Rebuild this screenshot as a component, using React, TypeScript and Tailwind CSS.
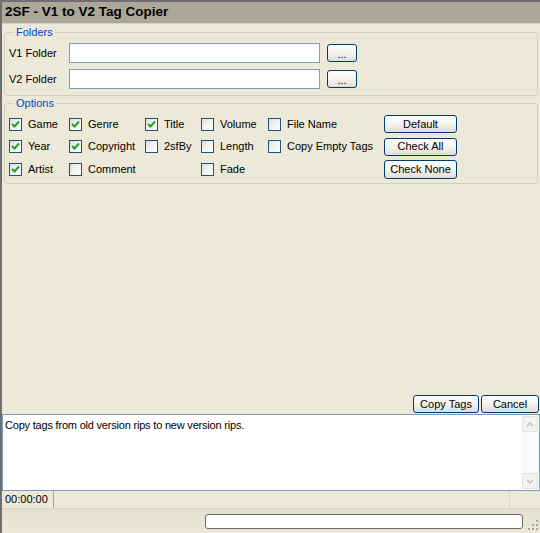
import React from "react";

const font = { fontFamily: '"Liberation Sans", Arial, sans-serif' };

function XpButton({ label, className }: { label: string; className: string }) {
  return (
    <button
      className={
        "flex items-center justify-center rounded-[3px] border border-[#003c74] bg-gradient-to-b from-white via-[#f4f3ee] to-[#e0ded3] text-[11px] text-black leading-none " +
        className
      }
    >
      {label}
    </button>
  );
}

function Check({ label, checked }: { label: string; checked?: boolean }) {
  return (
    <div className="flex items-center gap-[6px]">
      <div className="flex h-[13px] w-[13px] shrink-0 items-center justify-center border border-[#1c5180] bg-gradient-to-br from-[#dcdcd7] via-[#f4f4f1] to-white">
        {checked && (
          <svg width="9" height="9" viewBox="0 0 9 9">
            <path d="M1 4 L3.5 6.5 L8 1.5" stroke="#21a121" strokeWidth="2" fill="none" />
          </svg>
        )}
      </div>
      <span className="text-[11px] text-black">{label}</span>
    </div>
  );
}

export default function App() {
  return (
    <div
      style={font}
      className="flex h-[533px] w-[540px] flex-col overflow-hidden border-l-2 border-t-2 border-[#6f6f6f] bg-[#ece9d8] text-[11px] text-black"
    >
      <div className="flex h-[22px] shrink-0 items-center border-b border-[#d6d3c4] bg-[#aca899] pl-[3px] text-[13.5px] font-bold">
        2SF - V1 to V2 Tag Copier
      </div>

      <fieldset className="mx-[2px] mt-[2px] rounded-[4px] border border-[#d0d0bf] pb-[6px] pl-[4px] pr-[5px]">
        <legend className="ml-[5px] px-[2px] text-[11px] leading-[12px] text-[#0046d5]">Folders</legend>
        <div className="mt-[5px] flex flex-col gap-[6px]">
          {["V1 Folder", "V2 Folder"].map((l) => (
            <div key={l} className="flex h-[20px] items-center">
              <span className="w-[60px]">{l}</span>
              <div className="h-[20px] w-[251px] border border-[#7f9db9] bg-white" />
              <XpButton label="..." className="ml-[7px] h-[18px] w-[30px] pt-[3px]" />
            </div>
          ))}
        </div>
      </fieldset>

      <fieldset className="mx-[2px] mt-[1px] rounded-[4px] border border-[#d0d0bf] pb-[2px] pl-[4px] pr-[5px]">
        <legend className="ml-[5px] px-[2px] text-[11px] leading-[12px] text-[#0046d5]">Options</legend>
        <div className="mt-[4px] grid grid-cols-[60px_76px_56px_67px_116px_73px] grid-rows-[22px_23px_23px] items-center">
          <Check label="Game" checked />
          <Check label="Genre" checked />
          <Check label="Title" checked />
          <Check label="Volume" />
          <Check label="File Name" />
          <XpButton label="Default" className="h-[18px] w-[73px]" />

          <Check label="Year" checked />
          <Check label="Copyright" checked />
          <Check label="2sfBy" />
          <Check label="Length" />
          <Check label="Copy Empty Tags" />
          <XpButton label="Check All" className="h-[18px] w-[73px]" />

          <Check label="Artist" checked />
          <Check label="Comment" />
          <div />
          <Check label="Fade" />
          <div />
          <XpButton label="Check None" className="h-[19px] w-[73px]" />
        </div>
      </fieldset>

      <div className="flex-1" />

      <div className="flex h-[18px] shrink-0 justify-end gap-[2px] pr-px">
        <XpButton label="Copy Tags" className="h-[18px] w-[66px]" />
        <XpButton label="Cancel" className="h-[18px] w-[58px]" />
      </div>

      <div className="mt-px flex h-[77px] shrink-0 border border-[#7f9db9] bg-white">
        <div className="flex-1 px-[2px] pt-[2px] text-[11px] tracking-[-0.2px]">
          Copy tags from old version rips to new version rips.
        </div>
        <div className="flex w-[17px] flex-col justify-between bg-[#fafaf8] py-[1px]">
          <div className="flex h-[16px] w-[16px] items-center justify-center rounded-[2px] border border-[#e3e3de] bg-[#f3f3f0]">
            <svg width="8" height="5" viewBox="0 0 8 5">
              <path d="M1 4 L4 1 L7 4" stroke="#c3c3bc" strokeWidth="1.5" fill="none" />
            </svg>
          </div>
          <div className="flex h-[16px] w-[16px] items-center justify-center rounded-[2px] border border-[#e3e3de] bg-[#f3f3f0]">
            <svg width="8" height="5" viewBox="0 0 8 5">
              <path d="M1 1 L4 4 L7 1" stroke="#c3c3bc" strokeWidth="1.5" fill="none" />
            </svg>
          </div>
        </div>
      </div>

      <div className="flex h-[18px] shrink-0 items-stretch border-b border-[#d8d5c6]">
        <div className="flex w-[52px] items-center border-r border-[#aca899] pl-[3px] text-[11px]">00:00:00</div>
        <div className="flex-1 border-r border-[#d8d5c6]" />
        <div className="w-[30px]" />
      </div>

      <div className="flex h-[24px] shrink-0 items-center bg-gradient-to-b from-[#e3e0d1] to-[#ece9d8]">
        <div className="ml-[203px] h-[15px] w-[318px] rounded-[3px] border border-[#686868] bg-white" />
        <svg className="ml-[4px] mt-[8px]" width="12" height="12" viewBox="0 0 12 12">
          {[
            [9, 1],
            [9, 5],
            [5, 5],
            [9, 9],
            [5, 9],
            [1, 9],
          ].map(([x, y]) => (
            <rect key={`${x}-${y}`} x={x} y={y} width="2" height="2" fill="#aca899" />
          ))}
        </svg>
      </div>
    </div>
  );
}
